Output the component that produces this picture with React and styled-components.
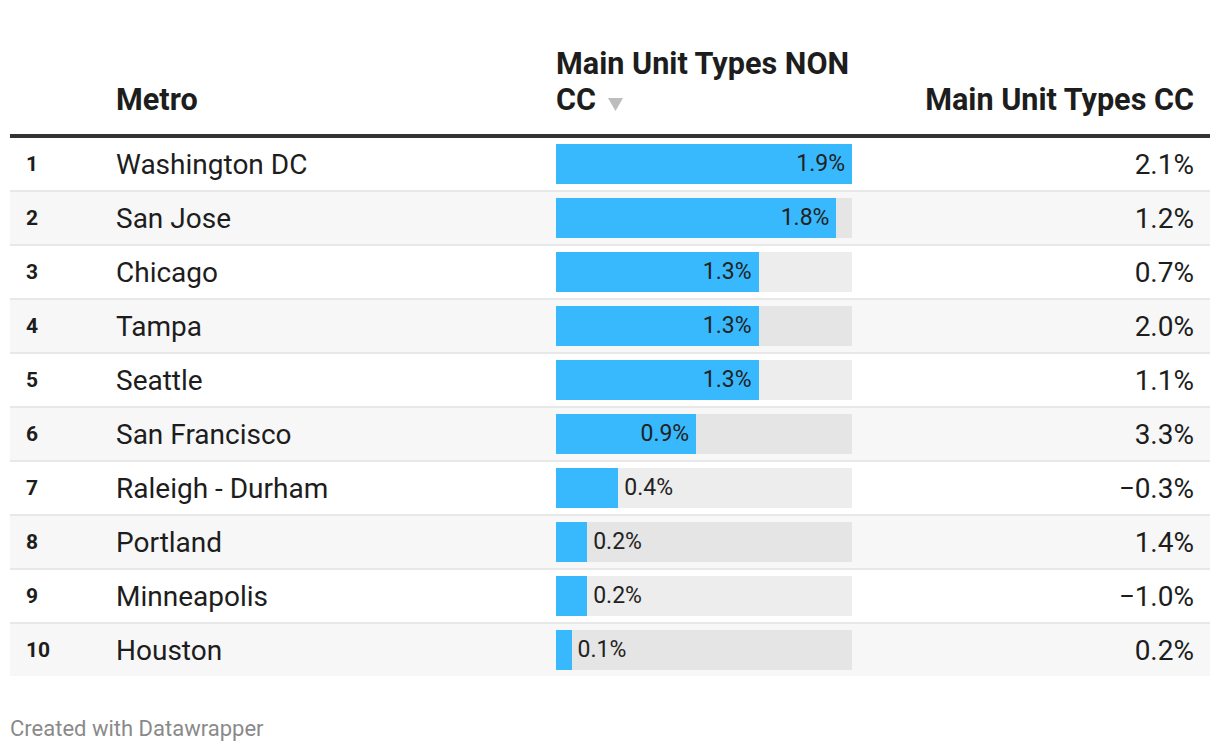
import styled, { createGlobalStyle } from 'styled-components'

const Global = createGlobalStyle`
  body {
    margin: 0;
    background: #fff;
    font-family: Roboto, "Liberation Sans", sans-serif;
    color: #1d1d1d;
  }
`

const rows = [
  { rank: 1, metro: 'Washington DC', non: 1.9, cc: '2.1%' },
  { rank: 2, metro: 'San Jose', non: 1.8, cc: '1.2%' },
  { rank: 3, metro: 'Chicago', non: 1.3, cc: '0.7%' },
  { rank: 4, metro: 'Tampa', non: 1.3, cc: '2.0%' },
  { rank: 5, metro: 'Seattle', non: 1.3, cc: '1.1%' },
  { rank: 6, metro: 'San Francisco', non: 0.9, cc: '3.3%' },
  { rank: 7, metro: 'Raleigh - Durham', non: 0.4, cc: '\u22120.3%' },
  { rank: 8, metro: 'Portland', non: 0.2, cc: '1.4%' },
  { rank: 9, metro: 'Minneapolis', non: 0.2, cc: '\u22121.0%' },
  { rank: 10, metro: 'Houston', non: 0.1, cc: '0.2%' },
]

const MAX = 1.9

const Page = styled.div`
  padding: 30px 10px 0;
`

const Grid = styled.div`
  display: grid;
  grid-template-columns: 90px 440px 328px 1fr;
  align-items: center;
`

const Head = styled(Grid)`
  align-items: end;
  padding: 16px 0 16px;
  border-bottom: 4px solid #333;
`

const HeadCell = styled.div`
  padding: 0 16px;
  font-size: 30.6px;
  line-height: 36px;
  font-weight: 700;
  color: #1d1d1d;
  text-align: ${p => (p.$right ? 'right' : 'left')};
`

const SortArrow = styled.svg`
  width: 15px;
  height: 13px;
  margin-left: 12px;
  vertical-align: -1px;
`

const Row = styled(Grid)`
  height: 52px;
  background: ${p => (p.$alt ? '#f7f7f7' : '#fff')};
  & + & {
    border-top: 2px solid #e8e8e8;
  }
`

const Rank = styled.div`
  padding: 0 16px;
  font-size: 21px;
  font-weight: 700;
  color: #1d1d1d;
`

const Name = styled.div`
  padding: 0 16px;
  font-size: 28px;
`

const BarCell = styled.div`
  padding: 0 16px;
`

const Track = styled.div`
  position: relative;
  height: 40px;
  background: rgba(0, 0, 0, 0.07);
`

const Fill = styled.div`
  height: 100%;
  background: #38b9fd;
`

const BarLabel = styled.span`
  position: absolute;
  top: 0;
  line-height: 40px;
  font-size: 23px;
  color: #222;
`

const Value = styled.div`
  padding: 0 16px;
  font-size: 28px;
  text-align: right;
`

const Footer = styled.div`
  margin-top: 40px;
  font-size: 22px;
  color: #8a8a8a;
`

function Bar({ value }) {
  const w = (value / MAX) * 296
  const inside = w > 100
  const label = `${value.toFixed(1)}%`
  return (
    <Track>
      <Fill style={{ width: w }} />
      {inside ? (
        <BarLabel style={{ right: 296 - w + 7 }}>{label}</BarLabel>
      ) : (
        <BarLabel style={{ left: w + 6 }}>{label}</BarLabel>
      )}
    </Track>
  )
}

export default function App() {
  return (
    <Page>
      <Global />
      <Head>
        <HeadCell />
        <HeadCell>Metro</HeadCell>
        <HeadCell>
          Main Unit Types NON CC
          <SortArrow viewBox="0 0 15 13">
            <path d="M0 0H15L7.5 13Z" fill="#bdbdbd" />
          </SortArrow>
        </HeadCell>
        <HeadCell $right>Main Unit Types CC</HeadCell>
      </Head>
      {rows.map((r, i) => (
        <Row key={r.rank} $alt={i % 2 === 1}>
          <Rank>{r.rank}</Rank>
          <Name>{r.metro}</Name>
          <BarCell>
            <Bar value={r.non} />
          </BarCell>
          <Value>{r.cc}</Value>
        </Row>
      ))}
      <Footer>Created with Datawrapper</Footer>
    </Page>
  )
}
